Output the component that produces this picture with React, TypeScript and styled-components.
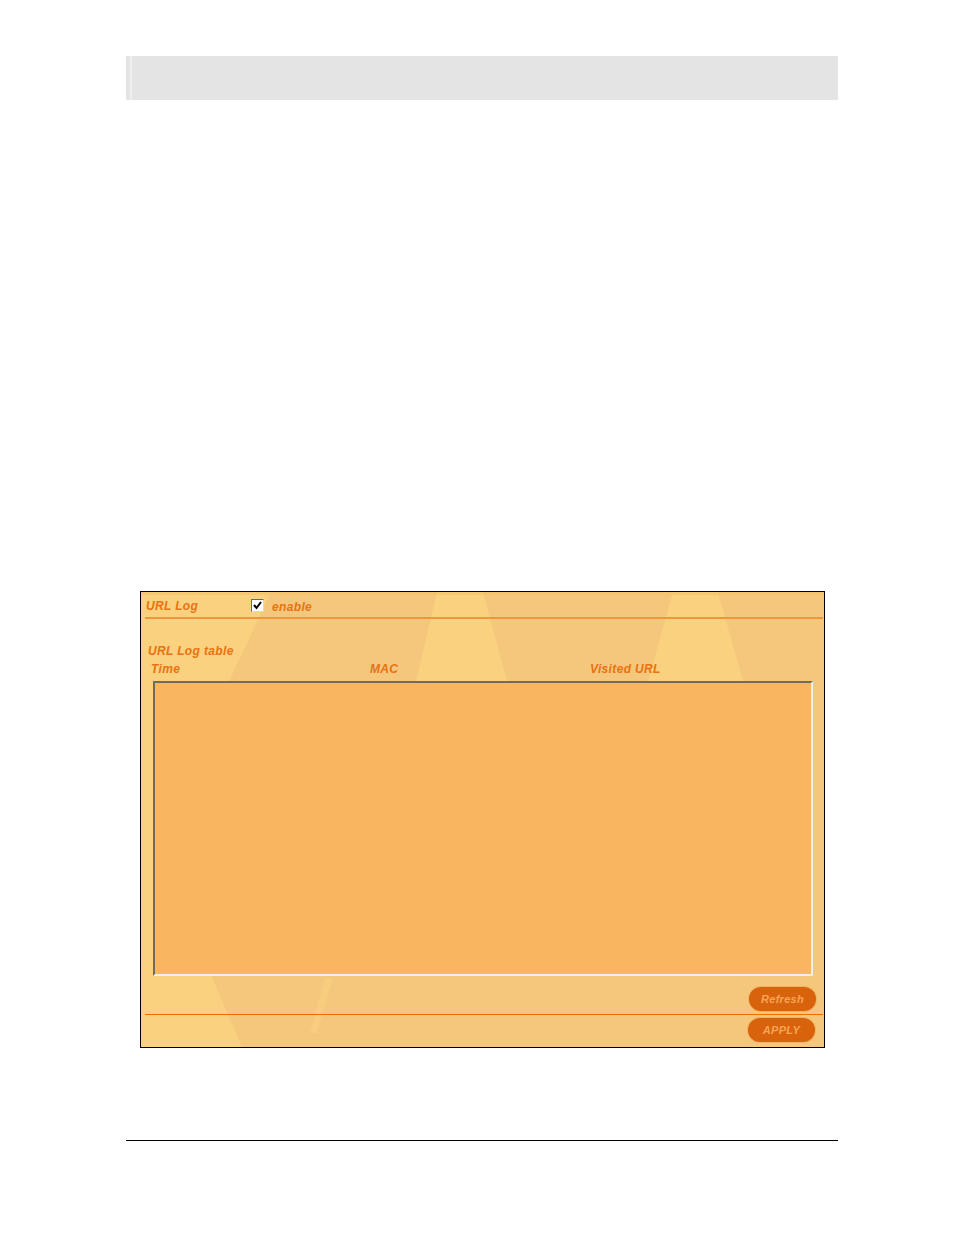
import React from "react";
import styled, { createGlobalStyle } from "styled-components";

const Global = createGlobalStyle`
  html, body { margin: 0; padding: 0; background: #ffffff; }
  body { font-family: "Liberation Sans", Arial, sans-serif; }
`;

const Page = styled.div`
  width: 954px;
  height: 1235px;
  display: flex;
  flex-direction: column;
  background: #ffffff;
`;

const HeaderBar = styled.div`
  margin: 56px 0 0 126px;
  width: 712px;
  height: 44px;
  background: linear-gradient(
    to right,
    #e4e4e4 0,
    #e4e4e4 4px,
    #eeeeee 4px,
    #eeeeee 6px,
    #e4e4e4 6px
  );
`;

const Panel = styled.div`
  position: relative;
  margin: 491px 0 0 140px;
  width: 685px;
  height: 457px;
  box-sizing: border-box;
  border: 1px solid #000;
  background: #f4c77c;
  display: flex;
  flex-direction: column;
  overflow: hidden;
`;

const Beams = styled.svg`
  position: absolute;
  left: 0;
  top: 0;
  width: 683px;
  height: 455px;
  z-index: 0;
`;

const Content = styled.div`
  position: relative;
  z-index: 1;
  display: flex;
  flex-direction: column;
`;

const Label = styled.span`
  font-family: "Liberation Sans", Arial, sans-serif;
  font-style: italic;
  font-weight: 700;
  font-size: 12px;
  line-height: 14px;
  letter-spacing: 0.35px;
  color: #ea7210;
  white-space: nowrap;
`;

const TopRow = styled.div`
  height: 25px;
  display: grid;
  grid-template-columns: 105px 13px auto;
  align-items: center;
  padding-left: 5px;
`;

const TitleLabel = styled(Label)`
  padding-top: 2px;
`;

const EnableLabel = styled(Label)`
  padding: 4px 0 0 8px;
`;

const CheckBox = styled.span`
  width: 13px;
  height: 13px;
  box-sizing: border-box;
  margin-top: 1px;
  background: #ffffff;
  border-top: 1px solid #6b6b6b;
  border-left: 1px solid #6b6b6b;
  border-right: 1px solid #d8d8d8;
  border-bottom: 1px solid #d8d8d8;
  display: flex;
  align-items: center;
  justify-content: center;
`;

const Divider = styled.div<{ $color: string; $size: number }>`
  height: ${(p) => p.$size}px;
  margin: 0 1px 0 4px;
  background: ${(p) => p.$color};
`;

const TableTitle = styled.div`
  margin-top: 25px;
  padding-left: 7px;
  height: 14px;
  display: flex;
  align-items: center;
`;

const ColumnHeads = styled.div`
  margin-top: 4px;
  height: 14px;
  display: grid;
  grid-template-columns: 219px 220px 1fr;
  padding-left: 10px;
  align-items: center;
`;

const LogBox = styled.div`
  margin: 5px 11px 0 12px;
  height: 295px;
  box-sizing: border-box;
  background: #f7b65f;
  border-top: 2px solid #6e6a64;
  border-left: 2px solid #6e6a64;
  border-right: 2px solid #f1efe9;
  border-bottom: 2px solid #f1efe9;
`;

const ButtonRow = styled.div<{ $top: number; $right: number }>`
  margin-top: ${(p) => p.$top}px;
  display: flex;
  justify-content: flex-end;
  padding-right: ${(p) => p.$right}px;
`;

const Rule = styled.div`
  flex: 1;
  height: 1px;
  margin: 0 1px 0 4px;
  background: #f46a00;
`;

const PillButton = styled.button`
  width: 67px;
  height: 24px;
  border: none;
  border-radius: 12px;
  background: #d9620c;
  color: #f7a553;
  font-family: "Liberation Sans", Arial, sans-serif;
  font-style: italic;
  font-weight: 700;
  font-size: 11px;
  letter-spacing: 0.3px;
  padding: 0;
  display: flex;
  align-items: center;
  justify-content: center;
  box-shadow: 0 0 0 1px rgba(240, 160, 70, 0.5);
`;

const FooterRule = styled.div`
  margin: 92px 0 0 126px;
  width: 712px;
  height: 1px;
  background: #000;
`;

export default function App() {
  return (
    <>
      <Global />
      <Page>
        <HeaderBar />
        <Panel>
          <Beams viewBox="0 0 683 455" aria-hidden="true">
            <polygon points="0,0 130,0 84,98 71,385 101,455 0,455" fill="#f9d17f" />
            <polygon points="296,0 342,0 366,89 275,89" fill="#f9d17f" />
            <polygon points="532,0 577,0 602,89 507,89" fill="#f9d17f" />
            <polygon points="184,386 192,386 176,441 169,441" fill="#f8cd7e" />
            <rect x="0" y="0" width="683" height="3" fill="#f6c068" opacity="0.6" />
          </Beams>
          <Content>
            <TopRow>
              <TitleLabel>URL Log</TitleLabel>
              <CheckBox>
                <svg width="9" height="9" viewBox="0 0 9 9">
                  <polyline
                    points="1,4 3.5,7 8,1"
                    fill="none"
                    stroke="#000"
                    strokeWidth="2"
                  />
                </svg>
              </CheckBox>
              <EnableLabel>enable</EnableLabel>
            </TopRow>
            <Divider $color="#f0953c" $size={2} />
            <TableTitle>
              <Label>URL Log table</Label>
            </TableTitle>
            <ColumnHeads>
              <Label>Time</Label>
              <Label>MAC</Label>
              <Label>Visited URL</Label>
            </ColumnHeads>
            <LogBox />
            <ButtonRow $top={11} $right={8}>
              <PillButton type="button">Refresh</PillButton>
            </ButtonRow>
            <ButtonRow $top={3} $right={0}>
              <Rule />
            </ButtonRow>
            <ButtonRow $top={3} $right={9}>
              <PillButton type="button">APPLY</PillButton>
            </ButtonRow>
          </Content>
        </Panel>
        <FooterRule />
      </Page>
    </>
  );
}
